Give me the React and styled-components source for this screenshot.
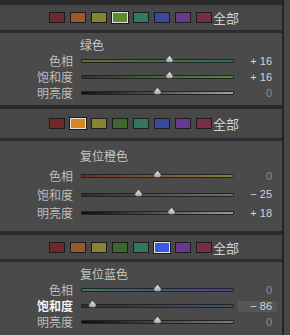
import React from 'react'
import styled, {createGlobalStyle} from 'styled-components'

const GlobalStyle = createGlobalStyle`
  html, body {
    margin: 0;
    padding: 0;
    background: #474747;
  }
  body {
    width: 290px;
    height: 335px;
    overflow: hidden;
    font-family: "Noto Sans CJK SC", "Noto Sans", sans-serif;
  }
`

const Frame = styled.div`
  display: flex;
  width: 290px;
  height: 335px;
  overflow: hidden;
  background: #474747;
`

const Column = styled.div`
  width: 282px;
  flex: none;
  display: flex;
  flex-direction: column;
  padding-top: 5px;
  background: #2a2a2a;
  border-right: 2px solid #242424;
`

const Panel = styled.section`
  display: flex;
  flex-direction: column;
  & + & {
    margin-top: 4px;
  }
`

const Header = styled.div`
  height: ${(p) => p.$h}px;
  display: flex;
  align-items: center;
  gap: 5px;
  padding-left: 49px;
  background: #474747;
  border-bottom: 3px solid #2c2c2c;
`

const Swatch = styled.span`
  width: 16px;
  height: 11px;
  box-sizing: border-box;
  background: ${(p) => p.$color};
  border: 1px solid ${(p) => (p.$active ? '#e2e2e2' : '#1c1c1c')};
  box-shadow: ${(p) => (p.$active ? '0 0 0 1px #1a1a1a' : 'none')};
`

const AllLabel = styled.span`
  margin-left: -4px;
  font-size: 13px;
  line-height: 13px;
  color: #d2d2d2;
`

const Body = styled.div`
  display: flex;
  flex-direction: column;
  padding: ${(p) => p.$pad};
  background: #4a4a4a;
`

const Title = styled.div`
  height: 16px;
  line-height: 16px;
  margin-bottom: ${(p) => p.$gap || 0}px;
  padding-left: 80px;
  font-size: 12px;
  color: #c6c6c6;
`

const Row = styled.div`
  display: grid;
  grid-template-columns: 73px 153px 35px;
  column-gap: 8px;
  align-items: center;
  height: ${(p) => p.$h}px;
`

const Label = styled.span`
  text-align: right;
  font-size: 12px;
  line-height: 12px;
  color: ${(p) => (p.$active ? '#f4f4f4' : '#bdbdbd')};
  font-weight: ${(p) => (p.$active ? 700 : 400)};
`

const Track = styled.div`
  position: relative;
  height: 4px;
  box-sizing: border-box;
  border: 1px solid #232323;
  border-radius: 1px;
  background: ${(p) => p.$grad};
`

const Thumb = styled.svg`
  position: absolute;
  top: -5px;
  width: 9px;
  height: 8px;
  margin-left: -4.5px;
`

const Value = styled.span`
  margin-left: -4px;
  padding-right: 5px;
  height: 11px;
  line-height: 11px;
  text-align: right;
  font-family: "Liberation Sans", Arial, sans-serif;
  font-size: 11px;
  color: ${(p) => (p.$zero ? '#8c8c8c' : '#d4d4d4')};
  background: ${(p) => (p.$focus ? '#565656' : 'transparent')};
`

const COLORS = ['#6c2a2b', '#985a2c', '#87852f', '#3d682e', '#33775f', '#394a9c', '#683a8c', '#772d46']

const panels = [
  {
    sel: 3,
    selColor: '#5a8c2c',
    headerH: 25,
    pad: '4px 0 4px',
    title: '绿色',
    rowH: 16,
    rows: [
      {label: '色相', value: 16, grad: 'linear-gradient(to right, #6a6a2c, #3f7438, #2c7265)'},
      {label: '饱和度', value: 16, grad: 'linear-gradient(to right, #333, #3f6a35, #4f8a3c)'},
      {label: '明亮度', value: 0, grad: 'linear-gradient(to right, #0e0e0e, #4f5a48, #9aa890)'},
    ],
  },
  {
    sel: 1,
    selColor: '#d9861f',
    headerH: 29,
    pad: '7px 0 8.5px',
    title: '复位橙色',
    titleGap: 3,
    rowH: 18.5,
    rows: [
      {label: '色相', value: 0, grad: 'linear-gradient(to right, #6e2c2c, #7a5a34, #85823a)'},
      {label: '饱和度', value: -25, grad: 'linear-gradient(to right, #2e2e2e, #555, #7a6c5e)'},
      {label: '明亮度', value: 18, grad: 'linear-gradient(to right, #0c0c0c, #555, #9a9a9a)'},
    ],
  },
  {
    sel: 5,
    selColor: '#3a58e2',
    headerH: 24,
    pad: '4px 0 5px',
    title: '复位蓝色',
    rowH: 16,
    rows: [
      {label: '色相', value: 0, grad: 'linear-gradient(to right, #357a66, #3a5a7e, #5a3a98)'},
      {label: '饱和度', value: -86, active: true, focus: true, grad: 'linear-gradient(to right, #2e2e2e, #3a4452, #3e5468)'},
      {label: '明亮度', value: 0, grad: 'linear-gradient(to right, #0c0c0c, #3e4a52, #6e7e88)'},
    ],
  },
]

const fmt = (v) => (v === 0 ? '0' : v > 0 ? `+ ${v}` : `\u2212 ${Math.abs(v)}`)

const SliderThumb = ({value}) => (
  <Thumb viewBox="0 0 9 8" style={{left: `${50 + value / 2}%`}}>
    <defs>
      <linearGradient id="tg" x1="0" y1="0" x2="0" y2="1">
        <stop offset="0" stopColor="#f0f0f0" />
        <stop offset="1" stopColor="#a0a0a0" />
      </linearGradient>
    </defs>
    <path d="M4.5 0.4 L8.4 5 Q8.6 7.6 4.5 7.6 Q0.4 7.6 0.6 5 Z" fill="url(#tg)" stroke="#2e2e2e" strokeWidth="0.6" />
  </Thumb>
)

const ColorPanel = ({panel}) => (
  <Panel>
    <Header $h={panel.headerH}>
      {COLORS.map((c, i) => (
        <Swatch key={i} $color={i === panel.sel ? panel.selColor : c} $active={i === panel.sel} />
      ))}
      <AllLabel>全部</AllLabel>
    </Header>
    <Body $pad={panel.pad}>
      <Title $gap={panel.titleGap}>{panel.title}</Title>
      {panel.rows.map((r) => (
        <Row key={r.label} $h={panel.rowH}>
          <Label $active={r.active}>{r.label}</Label>
          <Track $grad={r.grad}>
            <SliderThumb value={r.value} />
          </Track>
          <Value $zero={r.value === 0} $focus={r.focus}>
            {fmt(r.value)}
          </Value>
        </Row>
      ))}
    </Body>
  </Panel>
)

export default function App() {
  return (
    <Frame>
      <GlobalStyle />
      <Column>
        {panels.map((p) => (
          <ColorPanel key={p.title} panel={p} />
        ))}
      </Column>
    </Frame>
  )
}
